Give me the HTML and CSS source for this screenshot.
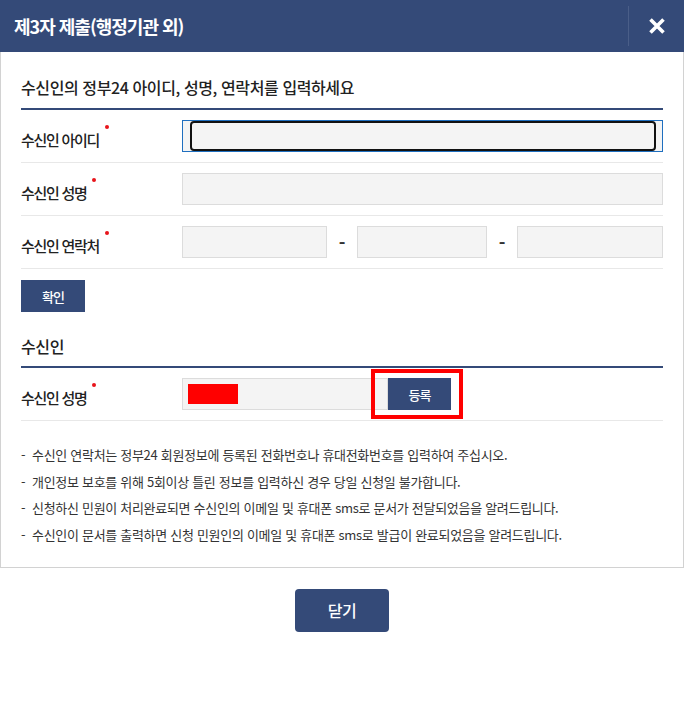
FILE: index.html
```html
<!DOCTYPE html>
<html lang="ko">
<head>
    <meta charset="UTF-8">
    <meta name="viewport" content="width=device-width, initial-scale=1.0">
    <title>제3자 제출</title>
    <link rel="stylesheet" href="styles.css">
</head>
<body>
    <div class="modal">
        <div class="modal-head">
            <h1 class="modal-title">제3자 제출(행정기관 외)</h1>
            <button class="modal-close" type="button" aria-label="닫기">
                <svg width="18" height="18" viewBox="0 0 18 18">
                    <path d="M2.5 2.5 L15.5 15.5 M15.5 2.5 L2.5 15.5" stroke="#fff" stroke-width="3.6" fill="none"/>
                </svg>
            </button>
        </div>

        <div class="modal-body">
            <h2 class="section-title">수신인의 정부24 아이디, 성명, 연락처를 입력하세요</h2>

            <div class="form-row">
                <div class="form-label">수신인 아이디<span class="req"></span></div>
                <div class="form-field">
                    <div class="field field-focus"></div>
                </div>
            </div>
            <div class="form-row">
                <div class="form-label">수신인 성명<span class="req"></span></div>
                <div class="form-field">
                    <div class="field"></div>
                </div>
            </div>
            <div class="form-row">
                <div class="form-label">수신인 연락처<span class="req"></span></div>
                <div class="form-field phone">
                    <div class="field"></div>
                    <span class="dash">-</span>
                    <div class="field"></div>
                    <span class="dash">-</span>
                    <div class="field"></div>
                </div>
            </div>

            <button class="btn-small" type="button">확인</button>

            <h2 class="section-title sub">수신인</h2>

            <div class="form-row">
                <div class="form-label">수신인 성명<span class="req"></span></div>
                <div class="form-field register">
                    <div class="field field-name"><span class="masked"></span></div>
                    <span class="marked">
                        <button class="btn-register" type="button">등록</button>
                    </span>
                </div>
            </div>

            <ul class="notes">
                <li>수신인 연락처는 정부24 회원정보에 등록된 전화번호나 휴대전화번호를 입력하여 주십시오.</li>
                <li>개인정보 보호를 위해 5회이상 틀린 정보를 입력하신 경우 당일 신청일 불가합니다.</li>
                <li>신청하신 민원이 처리완료되면 수신인의 이메일 및 휴대폰 sms로 문서가 전달되었음을 알려드립니다.</li>
                <li>수신인이 문서를 출력하면 신청 민원인의 이메일 및 휴대폰 sms로 발급이 완료되었음을 알려드립니다.</li>
            </ul>
        </div>

        <div class="modal-foot">
            <button class="btn-close" type="button">닫기</button>
        </div>
    </div>
</body>
</html>
```

FILE: styles.css
```css
body {
    margin: 0;
    background: #fff;
    font-family: "Noto Sans CJK KR", "Noto Sans", sans-serif;
    color: #222;
}

button {
    font-family: inherit;
    cursor: pointer;
}

.modal {
    width: 684px;
}

.modal-head {
    height: 52px;
    background: #344a78;
    display: flex;
    align-items: center;
    justify-content: space-between;
}

.modal-title {
    margin: 0 0 0 14px;
    font-size: 18px;
    font-weight: 700;
    letter-spacing: -1px;
    color: #fff;
}

.modal-close {
    width: 56px;
    height: 40px;
    padding: 0;
    border: 0;
    border-left: 1px solid #4a5e88;
    background: none;
    display: flex;
    align-items: center;
    justify-content: center;
}

.modal-body {
    border: 1px solid #d2d2d2;
    border-top: 0;
    padding: 0 20px 18px;
}

.section-title {
    margin: 0;
    padding: 24px 0 10px;
    line-height: 22px;
    font-size: 16px;
    font-weight: 500;
    letter-spacing: -0.4px;
    border-bottom: 2px solid #344a78;
}

.section-title.sub {
    padding-top: 23px;
    padding-bottom: 9px;
}

.form-row {
    height: 52px;
    display: flex;
    align-items: center;
    border-bottom: 1px solid #e8e8e8;
}

.form-label {
    width: 161px;
    flex-shrink: 0;
    font-size: 15px;
    font-weight: 500;
    letter-spacing: -1.3px;
    padding-top: 3px;
}

.req {
    display: inline-block;
    width: 4px;
    height: 4px;
    margin-left: 6px;
    border-radius: 50%;
    background: #e8141b;
    vertical-align: 17px;
}

.form-field {
    flex: 1;
    display: flex;
    align-items: center;
}

.field {
    box-sizing: border-box;
    flex: 1;
    height: 32px;
    background: #f4f4f4;
    border: 1px solid #dcdcdc;
}

.field-focus {
    position: relative;
    border-color: #1f6fbf;
}

.field-focus::after {
    content: "";
    position: absolute;
    top: 0;
    bottom: 0;
    left: 7px;
    right: 6px;
    border: 2px solid #111;
    border-radius: 4px;
}

.phone .field:nth-child(1) {
    flex: 0 0 145px;
}

.phone .field:nth-child(3) {
    flex: 0 0 130px;
}

.dash {
    width: 30px;
    text-align: center;
    font-size: 18px;
    font-weight: 700;
    color: #333;
}

.btn-small {
    margin-top: 11px;
    width: 64px;
    height: 32px;
    border: 0;
    background: #344a78;
    color: #fff;
    font-size: 13px;
    font-weight: 500;
    letter-spacing: -1px;
}

.register .field-name {
    flex: 0 0 206px;
    display: flex;
    align-items: center;
}

.masked {
    width: 50px;
    height: 20px;
    margin-left: 5px;
    background: #ff0000;
}

.marked {
    position: relative;
    display: flex;
}

.marked::after {
    content: "";
    position: absolute;
    top: -9px;
    bottom: -9px;
    left: -17px;
    right: -12px;
    border: 4px solid #ff0000;
}

.btn-register {
    width: 63px;
    height: 32px;
    border: 0;
    background: #344a78;
    color: #fff;
    font-size: 13px;
    font-weight: 500;
    letter-spacing: -1px;
}

.notes {
    list-style: none;
    margin: 21px 0 0;
    padding: 0;
    font-size: 13px;
    line-height: 26.7px;
    letter-spacing: -0.3px;
    color: #333;
}

.notes li::before {
    content: "-";
    display: inline-block;
    width: 11px;
}

.modal-foot {
    display: flex;
    justify-content: center;
    padding-top: 21px;
}

.btn-close {
    width: 94px;
    height: 43px;
    border: 0;
    border-radius: 4px;
    background: #344a78;
    color: #fff;
    font-size: 16px;
    font-weight: 500;
    letter-spacing: -0.5px;
}
```
